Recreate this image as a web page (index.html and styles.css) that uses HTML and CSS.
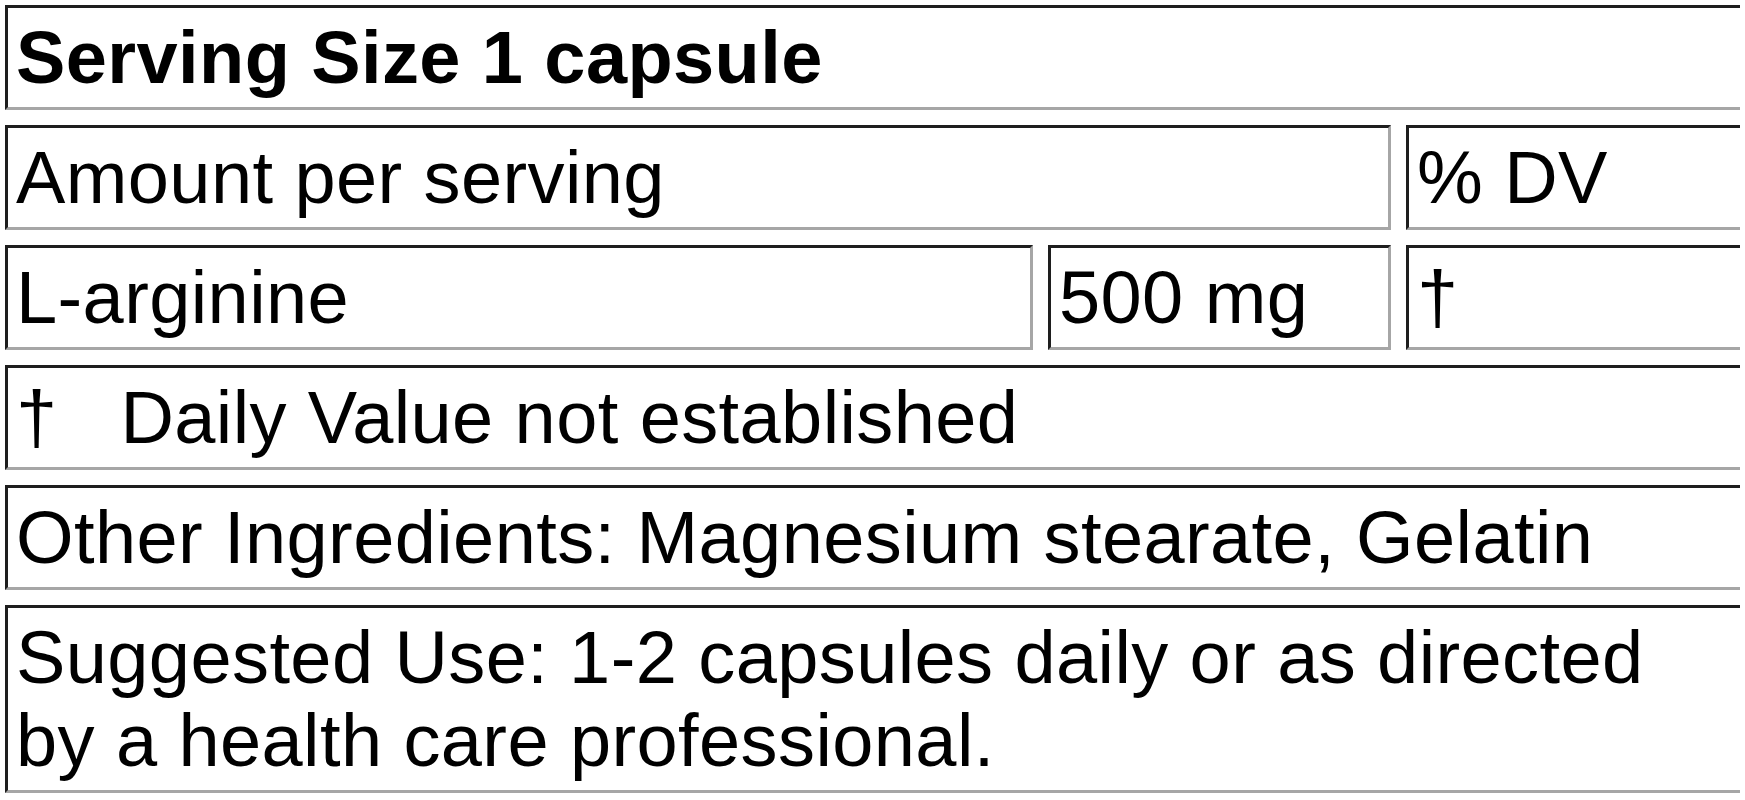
FILE: index.html
```html
<!DOCTYPE html>
<html lang="en">
<head>
<meta charset="utf-8">
<title>Supplement Facts</title>
<link rel="stylesheet" href="styles.css">
</head>
<body>
<div class="page">
  <div class="facts">
    <div class="cell span-all heading">Serving Size 1 capsule</div>
    <div class="cell span-two">Amount per serving</div>
    <div class="cell">% DV</div>
    <div class="cell">L-arginine</div>
    <div class="cell">500 mg</div>
    <div class="cell">†</div>
    <div class="cell span-all">†&nbsp;&nbsp;&nbsp;Daily Value not established</div>
    <div class="cell span-all">Other Ingredients: Magnesium stearate, Gelatin</div>
    <div class="cell span-all">Suggested Use: 1-2 capsules daily or as directed by a health care professional.</div>
  </div>
</div>
</body>
</html>
```

FILE: styles.css
```css
html, body {
  margin: 0;
  padding: 0;
  background: #ffffff;
}

.page {
  width: 1740px;
  height: 800px;
  overflow: hidden;
  padding: 5px 0 0 5px;
  box-sizing: border-box;
}

.facts {
  display: grid;
  width: 1760px;
  grid-template-columns: 1028px 343px 1fr;
  gap: 15px;
  font-family: "Liberation Sans", Arial, sans-serif;
  font-size: 74px;
  letter-spacing: 0.4px;
  line-height: 83px;
  color: #000000;
}

.cell {
  border-style: solid;
  border-width: 3px;
  border-color: #1e1e1e #a6a6a6 #a6a6a6 #1e1e1e;
  padding: 8px 70px 8px 8px;
}

.span-all {
  grid-column: 1 / 4;
}

.span-two {
  grid-column: 1 / 3;
}

.heading {
  font-weight: bold;
}
```
